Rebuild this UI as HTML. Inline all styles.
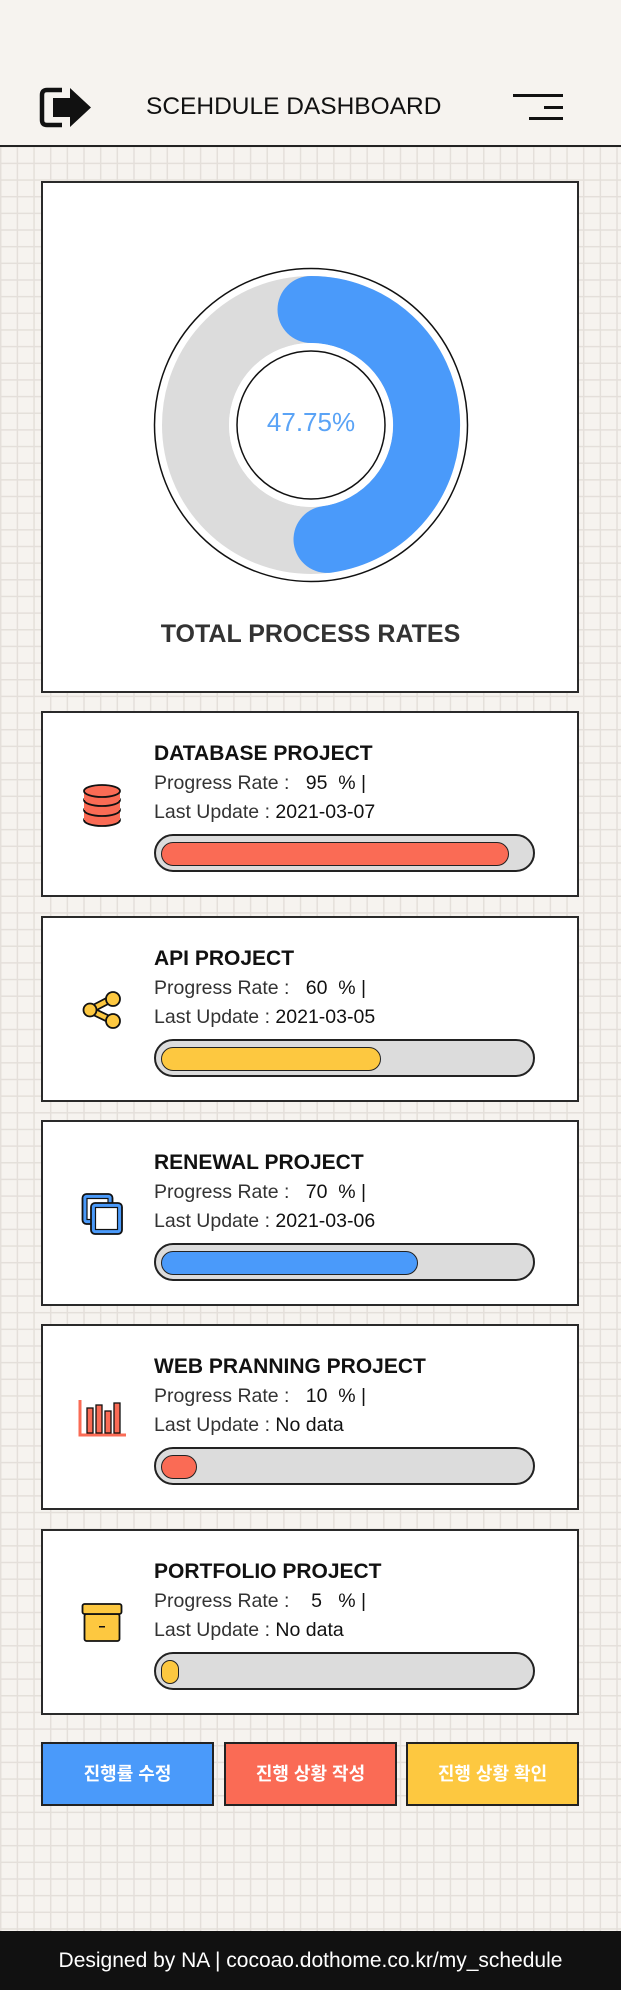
<!DOCTYPE html>
<html><head><meta charset="utf-8"><style>
*{margin:0;padding:0;box-sizing:border-box}
body{width:621px;height:1990px;position:relative;overflow:hidden;font-family:"Liberation Sans","Noto Sans CJK KR",sans-serif;
background-color:#f6f3ef;
background-image:linear-gradient(#e4dfda 1.5px,transparent 1.5px),linear-gradient(90deg,#e4dfda 1.5px,transparent 1.5px);
background-size:16.67px 16.67px;background-position:0 146px}
.hdr{position:absolute;left:0;top:0;width:621px;height:147px;background:#f6f3ef;border-bottom:2px solid #222}
.title{position:absolute;left:146px;top:93px;font-size:24.5px;color:#111;line-height:28px;white-space:nowrap}
.abs{position:absolute}
.card{position:absolute;left:41px;width:538px;height:186px;background:#fff;border:2px solid #2a2a2a}
.card h3{position:absolute;left:111px;top:28px;font-size:21px;font-weight:bold;color:#111;line-height:26px;white-space:nowrap}
.card .l1,.card .l2{position:absolute;left:111px;font-size:19.5px;color:#111;line-height:22px;white-space:pre}
.card .l1{top:59px}.card .l2{top:88px}
.lt{color:#333;font-weight:normal}
.bar{position:absolute;left:111px;top:121px;width:381px;height:38px;border:2px solid #222;border-radius:19px;background:#dcdcdc}
.fill{position:absolute;left:5px;top:6px;height:24px;border:1.5px solid #222;border-radius:12px}
.btn{position:absolute;top:1742px;height:64px;border:2px solid #222;color:#fff;font-size:18px;font-weight:bold;text-align:center;line-height:60px}
.ftr{position:absolute;left:0;top:1931px;width:621px;height:59px;background:#111;color:#fff;font-size:21px;text-align:center;line-height:59px}
</style></head><body>
<div class="hdr"></div>
<svg class="abs" style="left:38px;top:85px" width="56" height="45" viewBox="38 85 56 45">
<path d="M62 90 H47 Q42 90 42 95 V120 Q42 125 47 125 H62" fill="none" stroke="#111" stroke-width="4.5"/>
<path d="M53 98 H70 V88 L91 107.5 L70 127 V117 H53 Z" fill="#111"/>
</svg>
<div class="title">SCEHDULE DASHBOARD</div>
<svg class="abs" style="left:510px;top:90px" width="56" height="34" viewBox="510 90 56 34">
<rect x="513" y="94" width="50" height="3" fill="#111"/>
<rect x="544" y="106" width="19" height="3" fill="#111"/>
<rect x="529" y="117" width="34" height="3" fill="#111"/>
</svg>

<div class="abs" style="left:41px;top:181px;width:538px;height:512px;background:#fff;border:2px solid #2a2a2a"></div>
<svg class="abs" style="left:0;top:0" width="621" height="700">
<circle cx="311" cy="425" r="156.5" fill="#fff" stroke="#111" stroke-width="1.5"/>
<circle cx="311" cy="425" r="115.5" fill="none" stroke="#dcdcdc" stroke-width="67"/>
<path d="M311 309.5 A115.5 115.5 0 0 1 327 539.4" fill="none" stroke="#4a9afa" stroke-width="67" stroke-linecap="round"/>
<circle cx="311" cy="425" r="82" fill="#fff"/>
<circle cx="311" cy="425" r="74" fill="#fff" stroke="#111" stroke-width="1.5"/>
<text x="311" y="431" text-anchor="middle" font-family="Liberation Sans" font-size="26" font-weight="300" fill="#5aa3f6">47.75%</text>
</svg>
<div class="abs" style="left:0;width:621px;top:619px;text-align:center;font-size:25px;font-weight:bold;color:#333;line-height:30px">TOTAL PROCESS RATES</div>

<div class="card" style="top:711px"><h3>DATABASE PROJECT</h3>
<div class="l1"><span class="lt">Progress Rate :   </span>95  % |</div>
<div class="l2"><span class="lt">Last Update : </span>2021-03-07</div>
<div class="bar"><div class="fill" style="width:348px;background:#fa6b55"></div></div></div>
<div class="card" style="top:916px"><h3>API PROJECT</h3>
<div class="l1"><span class="lt">Progress Rate :   </span>60  % |</div>
<div class="l2"><span class="lt">Last Update : </span>2021-03-05</div>
<div class="bar"><div class="fill" style="width:220px;background:#fdc840"></div></div></div>
<div class="card" style="top:1120px"><h3>RENEWAL PROJECT</h3>
<div class="l1"><span class="lt">Progress Rate :   </span>70  % |</div>
<div class="l2"><span class="lt">Last Update : </span>2021-03-06</div>
<div class="bar"><div class="fill" style="width:257px;background:#4a9afa"></div></div></div>
<div class="card" style="top:1324px"><h3>WEB PRANNING PROJECT</h3>
<div class="l1"><span class="lt">Progress Rate :   </span>10  % |</div>
<div class="l2"><span class="lt">Last Update : </span>No data</div>
<div class="bar"><div class="fill" style="width:36px;background:#fa6b55"></div></div></div>
<div class="card" style="top:1529px"><h3>PORTFOLIO PROJECT</h3>
<div class="l1"><span class="lt">Progress Rate :    </span>5   % |</div>
<div class="l2"><span class="lt">Last Update : </span>No data</div>
<div class="bar"><div class="fill" style="width:18px;background:#fdc840"></div></div></div>

<svg class="abs" style="left:0;top:0" width="160" height="1700" stroke="#111" stroke-width="1.8">
<ellipse cx="102" cy="820" rx="18" ry="6" fill="#fa6b55"/>
<rect x="84" y="810" width="36" height="10" fill="#fa6b55" stroke="none"/>
<ellipse cx="102" cy="810" rx="18" ry="6" fill="#fa6b55"/>
<rect x="84" y="800" width="36" height="10" fill="#fa6b55" stroke="none"/>
<ellipse cx="102" cy="800" rx="18" ry="6" fill="#fa6b55"/>
<rect x="84" y="791" width="36" height="9" fill="#fa6b55" stroke="none"/>
<ellipse cx="102" cy="791" rx="18" ry="6" fill="#fa6b55"/>
<path d="M90 1010 L113 998 M90 1010 L113 1021" stroke="#111" stroke-width="8" stroke-linecap="round"/>
<path d="M90 1010 L113 998 M90 1010 L113 1021" stroke="#fdc840" stroke-width="4.5" stroke-linecap="round"/>
<circle cx="90" cy="1010" r="6.5" fill="#fdc840"/>
<circle cx="113" cy="999" r="7" fill="#fdc840"/>
<circle cx="113" cy="1021" r="7" fill="#fdc840"/>
<rect x="82.5" y="1194" width="30" height="30" rx="4" fill="#4a9afa"/>
<rect x="87" y="1198.5" width="21" height="21" fill="#fff" stroke-width="1.2"/>
<rect x="91" y="1203" width="31" height="31" rx="4" fill="#4a9afa"/>
<rect x="95.5" y="1207.5" width="22" height="22" fill="#fff" stroke-width="1.2"/>
<path d="M80 1400 V1435 H126" fill="none" stroke="#fa6b55" stroke-width="3"/>
<rect x="87" y="1408" width="6" height="25" fill="#fa6b55" stroke-width="1.3"/>
<rect x="96" y="1405" width="6" height="28" fill="#fa6b55" stroke-width="1.3"/>
<rect x="105" y="1411" width="6" height="22" fill="#fa6b55" stroke-width="1.3"/>
<rect x="114" y="1403" width="6" height="30" fill="#fa6b55" stroke-width="1.3"/>
<rect x="84.5" y="1614" width="35" height="27" rx="2" fill="#fdc840"/>
<rect x="82.5" y="1604" width="39" height="10" rx="2" fill="#fdc840"/>
<rect x="99" y="1626" width="6" height="1.5" fill="#111" stroke="none"/>
</svg>

<div class="btn" style="left:41px;width:173px;background:#4a9afa">진행률 수정</div>
<div class="btn" style="left:224px;width:173px;background:#fa6b55">진행 상황 작성</div>
<div class="btn" style="left:406px;width:173px;background:#fdc840">진행 상황 확인</div>
<div class="ftr">Designed by NA | cocoao.dothome.co.kr/my_schedule</div>
</body></html>
